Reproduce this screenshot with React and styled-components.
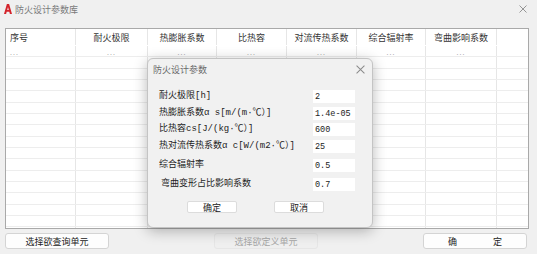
import React from "react";
import styled, { createGlobalStyle } from "styled-components";

const GlobalStyle = createGlobalStyle`
  html, body {
    margin: 0;
    padding: 0;
    background: #f0f0f0;
  }
  body {
    font-family: "Noto Sans CJK SC", "Noto Sans", sans-serif;
    font-size: 9px;
    color: #222;
  }
`;

const COLS = "70px 72px 69px 70px 70px 69px 71px 1fr";
const MONO = `"Liberation Mono", "Noto Sans CJK SC", monospace`;

const Window = styled.div`
  position: relative;
  width: 537px;
  height: 254px;
  display: flex;
  flex-direction: column;
  background: #f0f0f0;
  overflow: hidden;
`;

const TitleBar = styled.div`
  height: 18px;
  display: flex;
  align-items: center;
  gap: 3px;
  padding: 0 10px 0 4px;
  color: #7a7a7a;
`;

const TitleText = styled.span`
  flex: 1;
  line-height: 1;
`;

const CloseX = ({ size = 8 }) => (
  <svg width={size} height={size} viewBox="0 0 8 8">
    <path d="M0.5 0.5 L7.5 7.5 M7.5 0.5 L0.5 7.5" stroke="#8a8a8a" strokeWidth="0.9" />
  </svg>
);

const Logo = () => (
  <svg width="8" height="10" viewBox="0 0 8 10">
    <path d="M2.9 0 H5.1 L8 10 H5.9 L5.3 7.8 H2.7 L2.1 10 H0 Z M3.2 5.9 H4.8 L4 3 Z" fill="#d3232b" fillRule="evenodd" />
  </svg>
);

const Table = styled.div`
  margin: 10px 0 0 5px;
  width: 524px;
  height: 201px;
  box-sizing: border-box;
  border: 1px solid #a9a9a9;
  background: #fff;
  overflow: hidden;
`;

const Row = styled.div`
  display: grid;
  grid-template-columns: ${COLS};
  height: ${({ head }) => (head ? "17px" : "11.33px")};
  box-sizing: border-box;
  border-bottom: 1px solid ${({ head }) => (head ? "transparent" : "#ededed")};
`;

const Cell = styled.div`
  border-right: 1px solid #e6e6e6;
  display: flex;
  align-items: ${({ dots }) => (dots ? "flex-end" : "center")};
  justify-content: ${({ left }) => (left ? "flex-start" : "center")};
  padding-left: ${({ left }) => (left ? "4px" : "0")};
  color: ${({ dots }) => (dots ? "#a8a8a8" : "#333")};
  font-size: ${({ dots }) => (dots ? "7px" : "9px")};
  letter-spacing: ${({ dots }) => (dots ? "1px" : "0")};
  line-height: 1;
  white-space: nowrap;
  overflow: hidden;
  &:last-child {
    border-right: none;
  }
`;

const ButtonBar = styled.div`
  display: flex;
  gap: 105px;
  padding: 4px 0 0 5px;
`;

const Button = styled.div`
  width: 104px;
  height: 16px;
  box-sizing: border-box;
  display: flex;
  align-items: center;
  justify-content: center;
  gap: ${({ spread }) => (spread ? "36px" : "0")};
  background: ${({ disabled }) => (disabled ? "#efefef" : "#fdfdfd")};
  border: 1px solid ${({ disabled }) => (disabled ? "#e6e6e6" : "#d4d4d4")};
  border-radius: 3px;
  color: ${({ disabled }) => (disabled ? "#a6a6a6" : "#222")};
  line-height: 1;
`;

const Dialog = styled.div`
  position: absolute;
  left: 147px;
  top: 58px;
  width: 226px;
  height: 170px;
  box-sizing: border-box;
  border: 1px solid #c4c4c4;
  border-radius: 6px;
  background: #f1f1f1;
  box-shadow: 0 3px 14px rgba(0, 0, 0, 0.28);
  display: flex;
  flex-direction: column;
`;

const DialogTitle = styled.div`
  height: 20px;
  display: flex;
  align-items: center;
  justify-content: space-between;
  padding: 0 7px 0 5px;
  color: #6a6a6a;
  line-height: 1;
`;

const Form = styled.div`
  display: flex;
  flex-direction: column;
  padding: 11px 17px 0 11px;
`;

const Field = styled.div`
  display: flex;
  align-items: center;
  justify-content: space-between;
  height: 13px;
  margin-top: ${({ gap }) => gap}px;
`;

const Label = styled.span`
  font-family: ${MONO};
  font-size: 9px;
  color: #222;
  padding-left: ${({ indent }) => (indent ? "2px" : "0")};
  line-height: 1;
  white-space: nowrap;
`;

const Input = styled.div`
  width: 42px;
  height: 13px;
  box-sizing: border-box;
  background: #fff;
  font-family: ${MONO};
  font-size: 8.5px;
  color: #222;
  padding-left: 2px;
  display: flex;
  align-items: center;
`;

const DialogButtons = styled.div`
  display: flex;
  gap: 37px;
  padding: 10px 0 0 39px;
`;

const SmallButton = styled.div`
  width: 50px;
  height: 12px;
  box-sizing: border-box;
  background: #fff;
  border: 1px solid #dcdcdc;
  border-radius: 2px;
  display: flex;
  align-items: center;
  justify-content: center;
  line-height: 1;
  color: #222;
`;

const headers = ["序号", "耐火极限", "热膨胀系数", "比热容", "对流传热系数", "综合辐射率", "弯曲影响系数", ""];

const fields = [
  { label: "耐火极限[h]", value: "2", gap: 0 },
  { label: "热膨胀系数α s[m/(m·℃）]", value: "1.4e-05", gap: 4 },
  { label: "比热容cs[J/(kg·℃）]", value: "600", gap: 3 },
  { label: "热对流传热系数α c[W/(m2·℃）]", value: "25", gap: 4 },
  { label: "综合辐射率", value: "0.5", gap: 6 },
  { label: "弯曲变形占比影响系数", value: "0.7", gap: 6, indent: true },
];

export default function App() {
  const blank = Array.from({ length: 16 });
  return (
    <Window>
      <GlobalStyle />
      <TitleBar>
        <Logo />
        <TitleText>防火设计参数库</TitleText>
        <CloseX />
      </TitleBar>

      <Table>
        <Row head>
          {headers.map((h, i) => (
            <Cell key={i} left={i === 0}>{h}</Cell>
          ))}
        </Row>
        <Row>
          {headers.map((h, i) => (
            <Cell key={i} left={i === 0} dots>{i < 7 ? "..." : ""}</Cell>
          ))}
        </Row>
        {blank.map((_, r) => (
          <Row key={r}>
            {headers.map((h, i) => (
              <Cell key={i} />
            ))}
          </Row>
        ))}
      </Table>

      <ButtonBar>
        <Button>选择欲查询单元</Button>
        <Button disabled>选择欲定义单元</Button>
        <Button spread>
          <span>确</span>
          <span>定</span>
        </Button>
      </ButtonBar>

      <Dialog>
        <DialogTitle>
          <span>防火设计参数</span>
          <CloseX size={9} />
        </DialogTitle>
        <Form>
          {fields.map((f) => (
            <Field key={f.label} gap={f.gap}>
              <Label indent={f.indent}>{f.label}</Label>
              <Input>{f.value}</Input>
            </Field>
          ))}
        </Form>
        <DialogButtons>
          <SmallButton>确定</SmallButton>
          <SmallButton>取消</SmallButton>
        </DialogButtons>
      </Dialog>
    </Window>
  );
}
